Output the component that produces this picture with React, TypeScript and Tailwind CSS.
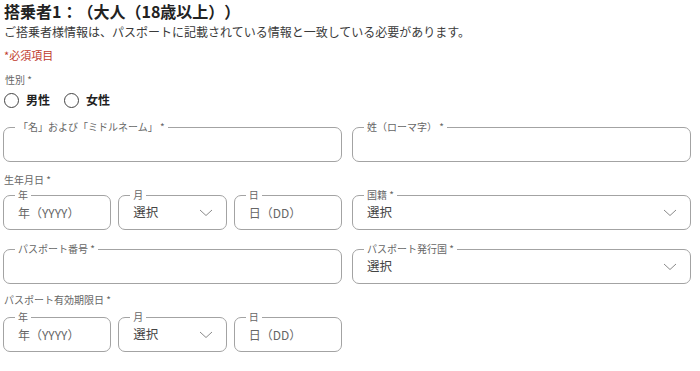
import { ReactNode } from "react";

const Chevron = () => (
  <svg width="14" height="8" viewBox="0 0 14 8" fill="none">
    <polyline points="1,1 7,6.5 13,1" stroke="#8a8a8a" strokeWidth="1" />
  </svg>
);

type BoxProps = {
  label: string;
  children?: ReactNode;
  select?: boolean;
};

const Box = ({ label, children, select }: BoxProps) => (
  <div className="relative h-[35px] rounded-[7px] border border-[#a3a3a3] flex items-center pl-[14px] pr-[13px]">
    <span className="absolute -top-[8px] left-[11px] bg-white px-[3px] text-[10px] leading-[14px] text-[#666] whitespace-nowrap">
      {label}
    </span>
    <div className="flex-1 text-[12px] text-[#666] whitespace-nowrap">{children}</div>
    {select && <Chevron />}
  </div>
);

const Pick = () => <span className="text-[12.5px] text-[#444]">選択</span>;

const DateRow = () => (
  <div className="grid grid-cols-3 gap-[7px]">
    <Box label="年">年（YYYY）</Box>
    <Box label="月" select>
      <Pick />
    </Box>
    <Box label="日">日（DD）</Box>
  </div>
);

const Radio = ({ label }: { label: string }) => (
  <label className="flex items-center gap-[7px]">
    <span className="w-[15px] h-[15px] rounded-full border-[1.5px] border-[#444]" />
    <span className="text-[12px] font-bold text-[#222]">{label}</span>
  </label>
);

export default function App() {
  return (
    <div className="w-[700px] h-[371px] bg-white pl-[3px] pr-[9px] [text-spacing-trim:space-all] font-[family-name:'Noto_Sans_CJK_JP','Noto_Sans',sans-serif]">
      <h1 className="pl-[1px] text-[16px] leading-[22px] font-bold text-[#222]">
        搭乗者1：（大人（18歳以上））
      </h1>
      <p className="mt-[2px] pl-[1px] text-[12px] leading-[16px] text-[#3a3a3a]">
        ご搭乗者様情報は、パスポートに記載されている情報と一致している必要があります。
      </p>
      <p className="mt-[7px] pl-[1px] text-[11px] leading-[16px] text-[#c0392b]">*必須項目</p>

      <p className="mt-[10px] pl-[2px] text-[10px] leading-[14px] text-[#666]">性別 *</p>
      <div className="mt-[4px] h-[18px] pl-[1px] flex items-center gap-[14px]">
        <Radio label="男性" />
        <Radio label="女性" />
      </div>

      <div className="mt-[18px] grid grid-cols-2 gap-[10px]">
        <Box label="「名」および「ミドルネーム」 *" />
        <Box label="姓（ローマ字） *" />
      </div>

      <p className="mt-[11px] pl-[1px] text-[10px] leading-[14px] text-[#666]">生年月日 *</p>
      <div className="mt-[8px] grid grid-cols-2 gap-[10px]">
        <DateRow />
        <Box label="国籍 *" select>
          <Pick />
        </Box>
      </div>

      <div className="mt-[19px] grid grid-cols-2 gap-[10px]">
        <Box label="パスポート番号 *" />
        <Box label="パスポート発行国 *" select>
          <Pick />
        </Box>
      </div>

      <p className="mt-[9px] pl-[1px] text-[10px] leading-[14px] text-[#666]">パスポート有効期限日 *</p>
      <div className="mt-[10px] grid grid-cols-2 gap-[10px]">
        <DateRow />
        <div />
      </div>
    </div>
  );
}
